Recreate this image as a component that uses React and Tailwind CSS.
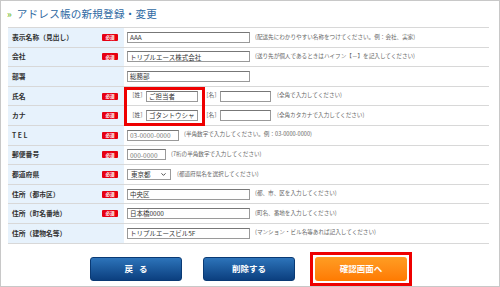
import { ChevronDown } from 'lucide-react'

const rows = [
  { label: '表示名称（見出し）', req: true, type: 'text', value: 'AAA', w: 123, hint: '(配送先にわかりやすい名称をつけてください。例：会社、実家)' },
  { label: '会社', req: true, type: 'text', value: 'トリプルエース株式会社', w: 123, hint: '(送り先が個人であるときはハイフン【－】を記入してください)' },
  { label: '部署', req: false, type: 'text', value: '総務部', w: 123, hint: '' },
  { label: '氏名', req: true, type: 'name', sei: 'ご担当者', hint: '(全角で入力してください)' },
  { label: 'カナ', req: true, type: 'name', sei: 'ゴタントウシャ', hint: '(全角カタカナで入力してください)' },
  { label: 'T E L', req: true, type: 'text', value: '03-0000-0000', w: 52, muted: true, hint: '(半角数字で入力してください。例：03-0000-0000)' },
  { label: '郵便番号', req: true, type: 'text', value: '000-0000', w: 39, muted: true, hint: '(7桁の半角数字で入力してください)' },
  { label: '都道府県', req: true, type: 'select', value: '東京都', hint: '(都道府県名を選択してください)' },
  { label: '住所（都市区）', req: true, type: 'text', value: '中央区', w: 123, hint: '(都、市、区を入力してください)' },
  { label: '住所（町名番地）', req: true, type: 'text', value: '日本橋0000', w: 123, hint: '(町名、番地を入力してください)' },
  { label: '住所（建物名等）', req: false, type: 'text', value: 'トリプルエースビル5F', w: 123, hint: '(マンション・ビル名等あれば記入してください)' },
]

function Field({ value, w, muted }) {
  return (
    <div
      className={`h-[11px] border border-[#9a9a9a] border-t-[#777] bg-white pl-[2px] flex items-center text-[6.5px] leading-none whitespace-nowrap overflow-hidden ${muted ? 'text-[#777]' : 'text-[#333]'}`}
      style={{ width: w }}
    >
      {value}
    </div>
  )
}

function App() {
  return (
    <div
      className="relative w-[500px] h-[287px] border border-[#c8c8c8] bg-white overflow-hidden"
      style={{ fontFamily: '"Noto Sans CJK JP", "Noto Sans", sans-serif' }}
    >
      {/* Title */}
      <div className="h-[26px] flex items-center pl-[6px] pt-[1px]">
        <span className="text-[#7cc242] text-[9px] font-bold leading-none mr-[5px]">»</span>
        <h2 className="text-[#2f6aa3] text-[10.6px] leading-none tracking-[0.2px]">アドレス帳の新規登録・変更</h2>
      </div>

      {/* Form table */}
      <div className="ml-[7px] w-[481px] border-b border-[#d8d8d8]">
        {rows.map((r, i) => (
          <div key={i} className="flex h-[19.6px] border-t border-[#d8d8d8]">
            <div className="w-[116px] bg-[#e7f2fc] flex items-center justify-between pl-[4px] pr-[6px]">
              <span className="text-[6.8px] font-bold text-[#333] leading-none">{r.label}</span>
              {r.req && (
                <span className="w-[16px] h-[7px] bg-[#e60012] text-white text-[4.6px] font-bold leading-none flex items-center justify-center rounded-[1px]">
                  必須
                </span>
              )}
            </div>
            <div className="flex-1 flex items-center pl-[3px]">
              {r.type === 'text' && <Field value={r.value} w={r.w} muted={r.muted} />}
              {r.type === 'name' && (
                <div className="flex items-center">
                  <span className="w-[17px] ml-[2px] text-[5.6px] text-[#555] leading-none whitespace-nowrap">［姓］</span>
                  <Field value={r.sei} w={52} />
                  <span className="w-[17px] ml-[5px] text-[5.6px] text-[#555] leading-none whitespace-nowrap">［名］</span>
                  <Field value="" w={51} />
                </div>
              )}
              {r.type === 'select' && (
                <div className="w-[44px] h-[11px] border border-[#9a9a9a] bg-white flex items-center justify-between pl-[3px] pr-[3px] text-[6.5px] text-[#333] leading-none">
                  <span>{r.value}</span>
                  <ChevronDown size={7} strokeWidth={3} className="text-[#333]" />
                </div>
              )}
              {r.hint && (
                <span
                  className={`text-[5.6px] text-[#666] leading-none whitespace-nowrap ${r.type === 'name' ? 'ml-[6px]' : r.type === 'select' ? 'ml-[6px]' : 'ml-[5px]'}`}
                >
                  {r.hint}
                </span>
              )}
            </div>
          </div>
        ))}
      </div>

      {/* Highlight over sei fields */}
      <div className="absolute left-[123px] top-[86px] w-[81px] h-[39px] border-[3px] border-[#ee0000] pointer-events-none" />

      {/* Buttons */}
      <div className="flex items-center pl-[89px] mt-[8px]">
        <button className="w-[92px] h-[24px] rounded-[3px] bg-gradient-to-b from-[#2d74ba] to-[#0b3f7f] border border-[#0a3a74] text-white text-[8.5px] font-bold tracking-[6px] pl-[6px]">
          戻る
        </button>
        <button className="ml-[21px] w-[92px] h-[24px] rounded-[3px] bg-gradient-to-b from-[#2d74ba] to-[#0b3f7f] border border-[#0a3a74] text-white text-[8.5px] font-bold">
          削除する
        </button>
        <div className="ml-[15px] border-[3px] border-[#ee0000] p-[2px]">
          <button className="block w-[92px] h-[24px] rounded-[3px] bg-gradient-to-b from-[#ff9d22] to-[#ff7a00] text-white text-[8.5px] font-bold">
            確認画面へ
          </button>
        </div>
      </div>
    </div>
  )
}

export default App
